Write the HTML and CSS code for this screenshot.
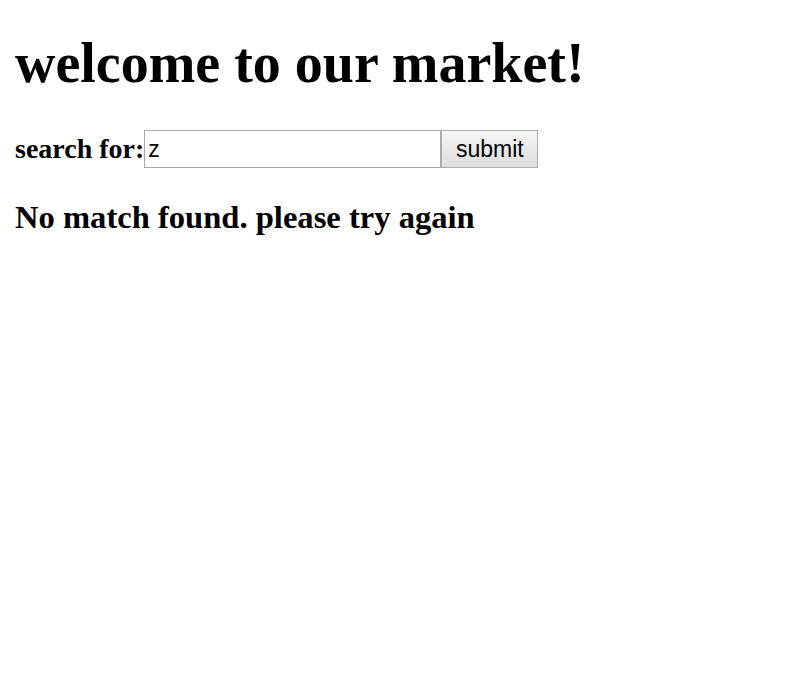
FILE: index.html
```html
<!DOCTYPE html>
<html>
<head>
<meta charset="utf-8">
<link rel="stylesheet" href="styles.css">
</head>
<body>
<h1 class="title">welcome to our market!</h1>
<form class="search">
<label class="label" for="q">search for:</label><input class="field" id="q" type="text" value="z"><button class="btn" type="button">submit</button>
</form>
<h3 class="msg">No match found. please try again</h3>
</body>
</html>
```
FILE: styles.css
```css
body {
  margin: 12px 15px;
  font-family: "Liberation Serif", serif;
  font-size: 24px;
  color: #000;
}
.title {
  font-size: 56px;
  font-weight: bold;
  margin: 19px 0 35px;
  line-height: 1.15;
}
.search {
  display: flex;
  align-items: center;
  margin: 0;
}
.label {
  font-weight: bold;
  font-size: 28px;
}
.field {
  box-sizing: border-box;
  width: 297px;
  height: 38px;
  border: 1px solid #a9a9a9;
  padding: 1px 3px;
  font-family: "Liberation Sans", sans-serif;
  font-size: 23px;
  margin: 0;
}
.btn {
  box-sizing: border-box;
  width: 97px;
  height: 38px;
  border: 1px solid #adadad;
  background: linear-gradient(#f6f6f6, #dddddd);
  font-family: "Liberation Sans", sans-serif;
  font-size: 23px;
  margin: 0;
  padding: 0;
}
.msg {
  font-size: 32.6px;
  font-weight: bold;
  margin: 31px 0 0;
}
```
